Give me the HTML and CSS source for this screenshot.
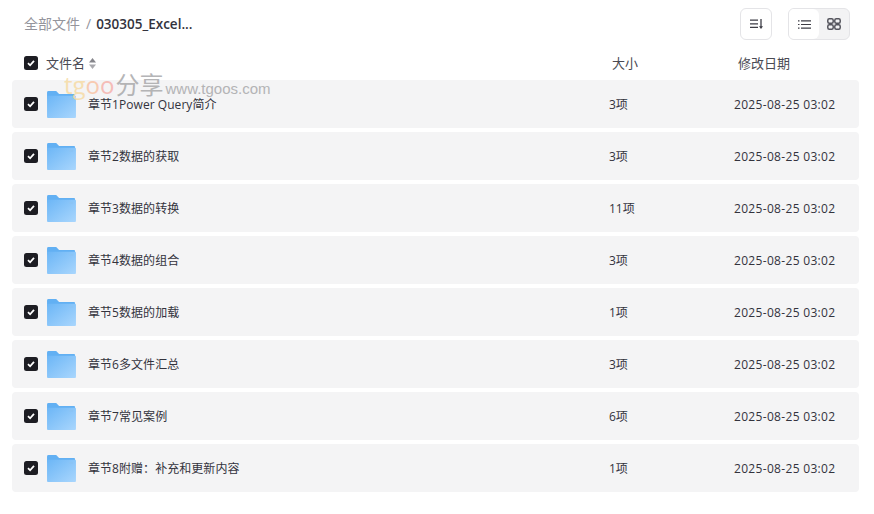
FILE: index.html
```html
<!DOCTYPE html>
<html lang="zh-CN">

<head>
    <meta charset="UTF-8">
    <title>全部文件</title>
    <link rel="stylesheet" href="styles.css">
</head>

<body>
    <svg class="svg-defs" width="0" height="0">
        <defs>
            <linearGradient id="folderBody" x1="0" y1="0" x2="1" y2="1">
                <stop offset="0" stop-color="#6cb6f6" />
                <stop offset="1" stop-color="#a9d6fd" />
            </linearGradient>
            <symbol id="folder" viewBox="0 0 30 28">
                <path d="M0 1.500Q0 0 1.500 0H9.500L12.500 3H28Q29 3 29 4V8H0Z" fill="#62b0f3" />
                <path d="M0 5H29.500Q30 5 30 5.500V27Q30 28 29 28H1Q0 28 0 27Z" fill="url(#folderBody)" />
                <rect x="23" y="7.500" width="4" height="1.500" fill="#8cc4f3" />
            </symbol>
            <symbol id="check" viewBox="0 0 14 14">
                <rect width="14" height="14" rx="2.500" fill="#1d1d23" />
                <path d="M4 7.200 6.100 9.300 10 4.900" fill="none" stroke="#fff" stroke-width="1.800" />
            </symbol>
        </defs>
    </svg>

    <div class="page">
        <!-- Top bar -->
        <div class="topbar">
            <div class="crumbs">
                <span class="crumb-root">全部文件</span>
                <span class="crumb-sep">/</span>
                <span class="crumb-current">030305_Excel...</span>
            </div>
            <div class="tools">
                <button type="button" class="tool-btn" aria-label="排序">
                    <svg width="13" height="10" viewBox="0 0 13 10" fill="none" stroke="#3d3d45" stroke-width="1.200">
                        <path d="M0 1.200H8M0 4.800H8M0 8.400H8" />
                        <path d="M11 0V8" stroke-width="1.300" />
                        <path d="M9 7.200 11 10 13 7.200Z" fill="#3d3d45" stroke="none" />
                    </svg>
                </button>
                <div class="view-switch">
                    <button type="button" class="view-btn active" aria-label="列表">
                        <svg width="13" height="9" viewBox="0 0 13 9" fill="none" stroke="#3d3d45" stroke-width="1.200">
                            <path d="M0 .8H1.500M3 .8H13M0 4.500H1.500M3 4.500H13M0 8.200H1.500M3 8.200H13" />
                        </svg>
                    </button>
                    <button type="button" class="view-btn" aria-label="宫格">
                        <svg width="14" height="12" viewBox="0 0 14 12" fill="none" stroke="#55555d" stroke-width="1.500">
                            <rect x="0.800" y="0.800" width="5.400" height="4.400" rx="1.500" />
                            <rect x="7.800" y="0.800" width="5.400" height="4.400" rx="1.500" />
                            <rect x="0.800" y="6.800" width="5.400" height="4.400" rx="1.500" />
                            <rect x="7.800" y="6.800" width="5.400" height="4.400" rx="1.500" />
                        </svg>
                    </button>
                </div>
            </div>
        </div>

        <!-- Table head -->
        <div class="table-head">
            <svg class="checkbox"><use href="#check" /></svg>
            <div class="head-name">
                文件名
                <svg class="sort-icon" width="7" height="11" viewBox="0 0 7 11" fill="#85858b">
                    <path d="M3.500 0 7 4.500H0Z" />
                    <path d="M3.500 11 7 6.500H0Z" fill="#a8a8ad" />
                </svg>
            </div>
            <div class="head-size">大小</div>
            <div class="head-date">修改日期</div>
        </div>

        <!-- File rows -->
        <div class="file-list">
            <div class="file-row">
                <svg class="checkbox"><use href="#check" /></svg>
                <svg class="folder"><use href="#folder" /></svg>
                <div class="file-name">章节1Power Query简介</div>
                <div class="file-size">3项</div>
                <div class="file-date">2025-08-25 03:02</div>
            </div>
            <div class="file-row">
                <svg class="checkbox"><use href="#check" /></svg>
                <svg class="folder"><use href="#folder" /></svg>
                <div class="file-name">章节2数据的获取</div>
                <div class="file-size">3项</div>
                <div class="file-date">2025-08-25 03:02</div>
            </div>
            <div class="file-row">
                <svg class="checkbox"><use href="#check" /></svg>
                <svg class="folder"><use href="#folder" /></svg>
                <div class="file-name">章节3数据的转换</div>
                <div class="file-size">11项</div>
                <div class="file-date">2025-08-25 03:02</div>
            </div>
            <div class="file-row">
                <svg class="checkbox"><use href="#check" /></svg>
                <svg class="folder"><use href="#folder" /></svg>
                <div class="file-name">章节4数据的组合</div>
                <div class="file-size">3项</div>
                <div class="file-date">2025-08-25 03:02</div>
            </div>
            <div class="file-row">
                <svg class="checkbox"><use href="#check" /></svg>
                <svg class="folder"><use href="#folder" /></svg>
                <div class="file-name">章节5数据的加载</div>
                <div class="file-size">1项</div>
                <div class="file-date">2025-08-25 03:02</div>
            </div>
            <div class="file-row">
                <svg class="checkbox"><use href="#check" /></svg>
                <svg class="folder"><use href="#folder" /></svg>
                <div class="file-name">章节6多文件汇总</div>
                <div class="file-size">3项</div>
                <div class="file-date">2025-08-25 03:02</div>
            </div>
            <div class="file-row">
                <svg class="checkbox"><use href="#check" /></svg>
                <svg class="folder"><use href="#folder" /></svg>
                <div class="file-name">章节7常见案例</div>
                <div class="file-size">6项</div>
                <div class="file-date">2025-08-25 03:02</div>
            </div>
            <div class="file-row">
                <svg class="checkbox"><use href="#check" /></svg>
                <svg class="folder"><use href="#folder" /></svg>
                <div class="file-name">章节8附赠：补充和更新内容</div>
                <div class="file-size">1项</div>
                <div class="file-date">2025-08-25 03:02</div>
            </div>
        </div>

        <!-- Watermark over the first row -->
        <div class="watermark">
            <span class="wm-t">t</span><span class="wm-g">g</span><span class="wm-o1">o</span><span class="wm-o2">o</span><span class="wm-cn">分享</span>
            <span class="wm-url">www.tgoos.com</span>
        </div>
    </div>
</body>

</html>
```

FILE: styles.css
```css
body {
    font-family: "Open Sans", "Noto Sans CJK SC", sans-serif;
    background-color: #fff;
    color: #33333d;
    margin: 0;
    padding: 0;
}

.svg-defs {
    display: block;
    height: 0;
}

.page {
    position: relative;
    width: 874px;
    height: 514px;
    padding: 8px 15px 0 12px;
    box-sizing: border-box;
    overflow: hidden;
}

/* Top bar */
.topbar {
    display: flex;
    justify-content: space-between;
    align-items: center;
    height: 32px;
    padding: 0 9px 0 12px;
}

.crumbs {
    display: flex;
    align-items: center;
    font-size: 14px;
    line-height: 32px;
    margin-top: -1px;
}

.crumb-root {
    color: #94949c;
}

.crumb-sep {
    color: #94949c;
    margin: 0 5px 0 6px;
}

.crumb-current {
    color: #33333d;
    font-weight: 600;
    font-size: 13.500px;
}

.tools {
    display: flex;
    gap: 16px;
}

.tool-btn {
    display: flex;
    align-items: center;
    justify-content: center;
    width: 32px;
    height: 32px;
    padding: 0;
    background: #fff;
    border: 1px solid #e4e4e7;
    border-radius: 6px;
}

.view-switch {
    display: flex;
    width: 62px;
    height: 32px;
    box-sizing: border-box;
    background: #f3f3f4;
    border: 1px solid #e4e4e7;
    border-radius: 6px;
    overflow: hidden;
}

.view-btn {
    display: flex;
    align-items: center;
    justify-content: center;
    flex: 1;
    padding: 0;
    background: transparent;
    border: none;
}

.view-btn.active {
    background: #fff;
    border-radius: 0 6px 6px 0;
}

/* Table */
.table-head {
    display: flex;
    align-items: center;
    height: 34px;
    padding-top: 6px;
    padding-left: 12px;
    font-size: 13px;
    line-height: 16px;
    color: #4a4a53;
}

.head-name {
    display: flex;
    align-items: center;
    gap: 4px;
    width: 566px;
    margin-left: 8px;
}

.head-size {
    width: 126px;
}

.file-list {
    display: flex;
    flex-direction: column;
    gap: 4px;
}

.file-row {
    display: flex;
    align-items: center;
    height: 48px;
    padding-left: 12px;
    background: #f4f4f5;
    border-radius: 4px;
    font-size: 12px;
}

.checkbox {
    flex: none;
    width: 14px;
    height: 14px;
}

.folder {
    flex: none;
    width: 29px;
    height: 27px;
    margin-left: 9px;
    margin-right: 12px;
}

.file-name {
    width: 521px;
    letter-spacing: 0.050px;
}

.file-size {
    width: 125px;
}

.file-date {
    letter-spacing: 0.320px;
}

.watermark {
    position: absolute;
    left: 64px;
    top: 71px;
    display: flex;
    align-items: baseline;
    white-space: nowrap;
    font-size: 24px;
    line-height: 28px;
    opacity: 0.85;
}

.wm-t,
.wm-g {
    color: #f7dca6;
}

.wm-o1 {
    color: #f9c4a6;
}

.wm-o2 {
    color: #f6b3ad;
}

.wm-cn {
    color: #a9a9ab;
    margin-left: 1px;
}

.wm-url {
    color: #a9a9ab;
    font-family: "Liberation Sans", sans-serif;
    font-size: 15px;
    margin-left: 2px;
}
```
